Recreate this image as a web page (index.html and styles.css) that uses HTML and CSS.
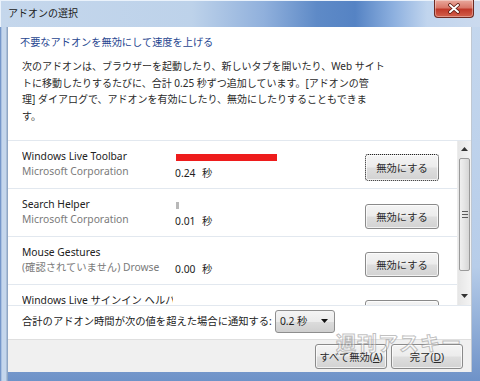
FILE: index.html
```html
<!DOCTYPE html>
<html lang="ja">
<head>
<meta charset="utf-8">
<title>アドオンの選択</title>
<link rel="stylesheet" href="styles.css">
</head>
<body>
<div class="window">
  <div class="titlebar">
    <span class="title">アドオンの選択</span>
    <div class="close">
      <svg width="14" height="11" viewBox="0 0 14 11"><path d="M3 2 L11 9 M11 2 L3 9" stroke="#5a1a12" stroke-width="3.6" stroke-linecap="round"/><path d="M3 2 L11 9 M11 2 L3 9" stroke="#ffffff" stroke-width="2" stroke-linecap="round"/></svg>
    </div>
  </div>
  <div class="frame">
    <div class="client">
      <h1 class="main">不要なアドオンを無効にして速度を上げる</h1>
      <p class="desc">次のアドオンは、ブラウザーを起動したり、新しいタブを開いたり、Web サイト<br>トに移動したりするたびに、合計 0.25 秒ずつ追加しています。[アドオンの管<br>理] ダイアログで、アドオンを有効にしたり、無効にしたりすることもできま<br>す。</p>
      <div class="list">
        <div class="rows">
          <div class="row">
            <div class="names"><div class="name">Windows Live Toolbar</div><div class="company">Microsoft Corporation</div></div>
            <div class="timing"><div class="bar red" style="width:101px"></div><div class="time">0.24 秒</div></div>
            <button class="btn focus">無効にする</button>
          </div>
          <div class="row">
            <div class="names"><div class="name">Search Helper</div><div class="company">Microsoft Corporation</div></div>
            <div class="timing"><div class="bar gray" style="width:3px"></div><div class="time">0.01 秒</div></div>
            <button class="btn">無効にする</button>
          </div>
          <div class="row">
            <div class="names"><div class="name">Mouse Gestures</div><div class="company">(確認されていません) Drowse</div></div>
            <div class="timing"><div class="bar none"></div><div class="time">0.00 秒</div></div>
            <button class="btn">無効にする</button>
          </div>
          <div class="row">
            <div class="names"><div class="name">Windows Live サインイン ヘルパー</div></div>
            <div class="timing"></div>
            <button class="btn"></button>
          </div>
        </div>
        <div class="scrollbar">
          <div class="sb-btn"><svg width="7" height="4" viewBox="0 0 7 4"><path d="M0 4 L3.5 0 L7 4Z" fill="#333"/></svg></div>
          <div class="sb-thumb"><span class="grip"></span><span class="grip"></span><span class="grip"></span></div>
          <div class="sb-track"></div>
          <div class="sb-btn"><svg width="7" height="4" viewBox="0 0 7 4"><path d="M0 0 L7 0 L3.5 4Z" fill="#333"/></svg></div>
        </div>
      </div>
      <div class="notify">
        <span class="notify-text">合計のアドオン時間が次の値を超えた場合に通知する:</span>
        <div class="select"><span>0.2 秒</span><svg width="7" height="4" viewBox="0 0 7 4"><path d="M0 0 L7 0 L3.5 4Z" fill="#111"/></svg></div>
      </div>
      <div class="footer">
        <button class="btn wide">すべて無効(<u>A</u>)</button>
        <button class="btn wide">完了(<u>D</u>)</button>
      </div>
    </div>
  </div>
  <div class="watermark">週刊アスキー</div>
</div>
</body>
</html>
```
FILE: styles.css
```css
* { box-sizing: border-box; }
html, body { margin: 0; padding: 0; }
body {
  width: 480px;
  height: 381px;
  overflow: hidden;
  font-family: "Noto Sans", "Noto Sans CJK JP", sans-serif;
  font-size: 10.3px;
  color: #1e1e1e;
  background: #9fbbe0;
}
.window {
  position: relative;
  width: 480px;
  height: 381px;
  display: flex;
  flex-direction: column;
  background: linear-gradient(90deg, #5b82bf 0, #c4d6ec 2px, #c4d6ec 6px, #8fa6c4 7px, #8fa6c4 8px, transparent 8px),
              linear-gradient(180deg, #c6d8ee 0%, #b7cde9 70%, #6e92c8 100%);
}
.titlebar {
  height: 27px;
  flex: none;
  display: flex;
  align-items: flex-start;
  justify-content: space-between;
  background: linear-gradient(90deg, #c5d7ec 0%, #bdd2ea 40%, #90b0dc 55%, #5e8ac7 66%, #5583c4 74%, #8db0df 82%, #c1d5ee 89%, #cbdaee 100%);
  box-shadow: inset 1px 1px 0 #eaf2fb;
}
.title {
  margin: 7px 0 0 8px;
  font-size: 10px;
  line-height: 13px;
  color: #1a1a1a;
}
.close {
  width: 40px;
  height: 18px;
  margin-right: 6px;
  display: flex;
  align-items: center;
  justify-content: center;
  background: linear-gradient(180deg, #e9a99d 0%, #d9786a 45%, #c0392a 55%, #d2604c 100%);
  border: 1px solid #6e2a22;
  border-top: none;
  border-radius: 0 0 4px 4px;
  box-shadow: inset 0 0 0 1px rgba(255,255,255,0.35);
}
.frame {
  flex: 1;
  display: flex;
  padding: 0 8px 9px 8px;
}
.client {
  flex: 1;
  display: flex;
  flex-direction: column;
  background: #fff;
  border-right: 1px solid #c0c8d2;
}
.main {
  margin: 7px 0 0 12px;
  font-size: 10.2px;
  font-weight: normal;
  line-height: 16px;
  color: #1f4690;
}
.desc {
  margin: 8px 0 0 14px;
  font-size: 10px;
  line-height: 16.7px;
  white-space: nowrap;
  color: #2a2a2a;
}
.list {
  margin-top: 15px;
  height: 166px;
  flex: none;
  display: flex;
  border-top: 1px solid #e2e8ef;
  border-bottom: 1px solid #e2e8ef;
  overflow: hidden;
}
.rows {
  flex: 1;
  overflow: hidden;
}
.row {
  height: 48px;
  display: grid;
  grid-template-columns: 153px 190px 74px;
  align-items: start;
  padding: 8px 0 0 14px;
  border-bottom: 1px solid #e2e8ef;
}
.names {
  overflow: hidden;
  white-space: nowrap;
  width: 151px;
}
.name { line-height: 15px; color: #222; }
.company { line-height: 15px; color: #7a7a7a; }
.timing { padding-left: 1px; }
.bar { height: 7px; margin-top: 5px; }
.bar.red { background: #ee1c1c; }
.bar.gray { background: #b8b8b8; }
.bar.none { background: transparent; }
.time { margin-top: 5px; line-height: 15px; margin-left: -1px; color: #222; word-spacing: 4px; }
.btn {
  font-family: inherit;
  font-size: 10.3px;
  color: #2a2a2a;
  height: 25px;
  width: 74px;
  margin-top: 7px;
  padding: 0;
  border: 1px solid #8a8a8a;
  border-radius: 3px;
  background: linear-gradient(180deg, #f4f4f4 0%, #ececec 48%, #dedede 52%, #d2d2d2 100%);
  box-shadow: inset 0 0 0 1px rgba(255,255,255,0.7);
}
.btn.focus {
  height: 27px;
  margin-top: 5px;
  border: 1px dotted #222;
}
.scrollbar {
  width: 14px;
  flex: none;
  display: flex;
  flex-direction: column;
  background: linear-gradient(90deg, #e6e6e6, #f4f4f4);
  border-left: 1px solid #ececec;
}
.sb-btn {
  height: 17px;
  flex: none;
  display: flex;
  align-items: center;
  justify-content: center;
}
.sb-thumb {
  height: 113px;
  flex: none;
  margin: 0 1px;
  border: 1px solid #9a9a9a;
  border-radius: 2px;
  background: linear-gradient(90deg, #f0f0f0 0%, #e4e4e4 50%, #d6d6d6 100%);
  display: flex;
  flex-direction: column;
  align-items: center;
  justify-content: center;
  gap: 2px;
}
.grip { width: 6px; height: 1px; background: #5a5a5a; }
.sb-track { flex: 1; }
.notify {
  height: 33px;
  flex: none;
  display: flex;
  align-items: center;
  padding: 0 0 1px 14px;
  gap: 3px;
  color: #222;
}
.notify-text { white-space: nowrap; flex: none; line-height: 15px; }
.select {
  width: 60px;
  height: 23px;
  flex: none;
  display: flex;
  align-items: center;
  justify-content: space-between;
  padding: 0 6px 2px 4px;
  border: 1px solid #8e8e8e;
  border-radius: 3px;
  background: linear-gradient(180deg, #f4f4f4 0%, #ebebeb 50%, #dcdcdc 51%, #cfcfcf 100%);
}
.footer {
  flex: 1;
  display: flex;
  justify-content: flex-end;
  align-items: flex-start;
  gap: 4px;
  padding: 4px 8px 0 0;
  background: #f0f0f0;
  border-top: 1px solid #dfdfdf;
}
.footer .btn { margin-top: 0; width: 72px; }
.watermark {
  position: absolute;
  left: 336px;
  top: 328px;
  font-size: 20px;
  font-weight: bold;
  letter-spacing: 1px;
  color: rgba(255,255,255,0.45);
  -webkit-text-stroke: 1px rgba(140,140,140,0.55);
  pointer-events: none;
}
```
